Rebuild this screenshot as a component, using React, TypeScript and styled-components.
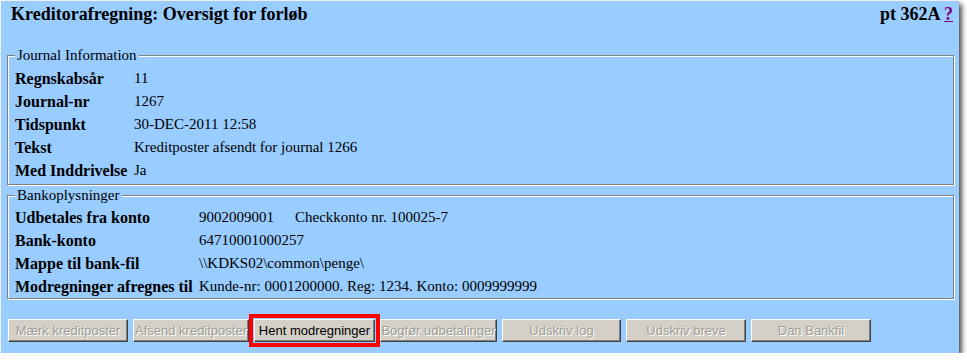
import React from 'react';
import styled, { createGlobalStyle } from 'styled-components';

const GlobalStyle = createGlobalStyle`
  body {
    margin: 0;
    background: #ffffff;
    font-family: "Liberation Serif", "Times New Roman", serif;
  }
`;

const Panel = styled.div`
  box-sizing: border-box;
  margin: 1px 0 0 1px;
  width: 958px;
  height: 352px;
  padding: 3px 5px 0 6px;
  background: #99ccff;
  box-shadow: 3px 3px 5px rgba(0, 0, 0, 0.7);
`;

const Header = styled.div`
  display: flex;
  justify-content: space-between;
  align-items: baseline;
  padding: 0 1px 0 4px;
  font-size: 18px;
  line-height: 21px;
  font-weight: bold;
`;

const HelpLink = styled.a`
  color: #800080;
  text-decoration: underline;
`;

const Fieldset = styled.fieldset<{ $top: number; $pad: string }>`
  margin: ${(p) => p.$top}px 0 0 0;
  padding: ${(p) => p.$pad};
  min-width: 0;
  border: 1px solid #808080;
  box-shadow: 1px 1px 0 #ffffff, inset 1px 1px 0 #ffffff;
`;

const Legend = styled.legend`
  padding: 0 2px;
  background: #99ccff;
  font-size: 15px;
  line-height: 17px;
`;

const Rows = styled.div<{ $label: number }>`
  display: grid;
  grid-template-columns: ${(p) => p.$label}px 1fr;
  grid-auto-rows: 23px;
  align-items: center;
  font-size: 15px;
`;

const Label = styled.div`
  font-size: 16px;
  font-weight: bold;
  white-space: nowrap;
`;

const Value = styled.div`
  white-space: nowrap;
`;

const Extra = styled.span`
  margin-left: 21px;
`;

const ButtonBar = styled.div`
  display: flex;
  gap: 5px;
  margin: 20px 0 0 1px;
`;

const Button = styled.button<{ $w: number; $highlight?: boolean }>`
  box-sizing: border-box;
  width: ${(p) => p.$w}px;
  height: 23px;
  padding: 0;
  background: #d4d0c8;
  border: 1px solid;
  border-color: #ffffff #404040 #404040 #ffffff;
  box-shadow: inset -1px -1px 0 #808080;
  font-family: "Liberation Sans", Arial, sans-serif;
  font-size: 13px;
  color: #000000;
  white-space: nowrap;
  overflow: hidden;
  outline: ${(p) => (p.$highlight ? '4px solid #ff0000' : 'none')};
  outline-offset: 1px;

  &:disabled {
    color: #a19e97;
    text-shadow: 1px 1px 0 #ffffff;
  }
`;

const journal = [
  ['Regnskabsår', '11'],
  ['Journal-nr', '1267'],
  ['Tidspunkt', '30-DEC-2011 12:58'],
  ['Tekst', 'Kreditposter afsendt for journal 1266'],
  ['Med Inddrivelse', 'Ja'],
];

const buttons = [
  { label: 'Mærk kreditposter', w: 120 },
  { label: 'Afsend kreditposter', w: 116 },
  { label: 'Hent modregninger', w: 121, active: true },
  { label: 'Bogfør udbetalinger', w: 117 },
  { label: 'Udskriv log', w: 119 },
  { label: 'Udskriv breve', w: 120 },
  { label: 'Dan Bankfil', w: 120 },
];

const App = () => {
  return (
    <>
      <GlobalStyle />
      <Panel>
        <Header>
          <span>Kreditorafregning: Oversigt for forløb</span>
          <span>
            pt 362A <HelpLink href="#">?</HelpLink>
          </span>
        </Header>

        <Fieldset $top={22} $pad="3px 7px 2px 7px">
          <Legend>Journal Information</Legend>
          <Rows $label={119}>
            {journal.map(([label, value]) => (
              <React.Fragment key={label}>
                <Label>{label}</Label>
                <Value>{value}</Value>
              </React.Fragment>
            ))}
          </Rows>
        </Fieldset>

        <Fieldset $top={2} $pad="2px 7px 0 7px">
          <Legend>Bankoplysninger</Legend>
          <Rows $label={184}>
            <Label>Udbetales fra konto</Label>
            <Value>
              9002009001<Extra>Checkkonto nr. 100025-7</Extra>
            </Value>
            <Label>Bank-konto</Label>
            <Value>64710001000257</Value>
            <Label>Mappe til bank-fil</Label>
            <Value>\\KDKS02\common\penge\</Value>
            <Label>Modregninger afregnes til</Label>
            <Value>Kunde-nr: 0001200000. Reg: 1234. Konto: 0009999999</Value>
          </Rows>
        </Fieldset>

        <ButtonBar>
          {buttons.map((b) => (
            <Button key={b.label} $w={b.w} $highlight={b.active} disabled={!b.active}>
              {b.label}
            </Button>
          ))}
        </ButtonBar>
      </Panel>
    </>
  );
};

export default App;
